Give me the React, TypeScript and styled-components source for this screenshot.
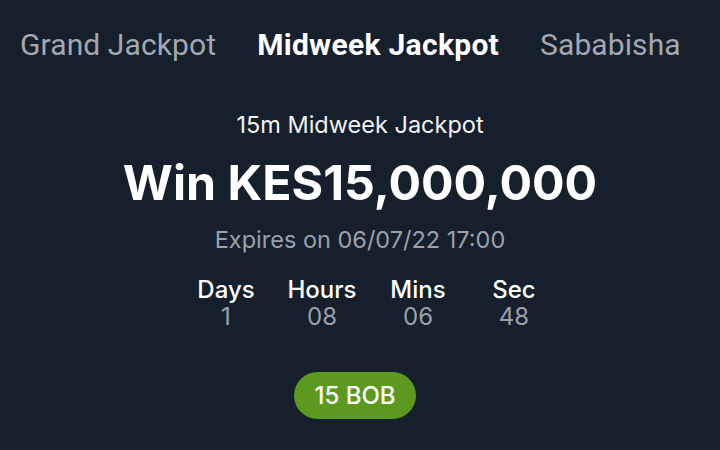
import styled, { createGlobalStyle } from 'styled-components';

const GlobalStyle = createGlobalStyle`
  html, body {
    margin: 0;
    padding: 0;
    background-color: #161f2c;
  }
  body {
    width: 720px;
    height: 450px;
    overflow: hidden;
    font-family: Inter, 'Noto Sans', sans-serif;
  }
`;

const tabs = ['Grand Jackpot', 'Midweek Jackpot', 'Sababisha'];
const active = 'Midweek Jackpot';

const countdown = [
  { label: 'Days', value: '1' },
  { label: 'Hours', value: '08' },
  { label: 'Mins', value: '06' },
  { label: 'Sec', value: '48' },
];

export default function App() {
  return (
    <Page>
      <GlobalStyle />
      <TabBar>
        {tabs.map((t) => (
          <Tab key={t} active={t === active}>
            {t}
          </Tab>
        ))}
      </TabBar>
      <Content>
        <Subtitle>15m Midweek Jackpot</Subtitle>
        <Title>Win KES15,000,000</Title>
        <Expiry>Expires on 06/07/22 17:00</Expiry>
        <Countdown>
          {countdown.map((c) => (
            <Unit key={c.label}>
              <UnitLabel>{c.label}</UnitLabel>
              <UnitValue>{c.value}</UnitValue>
            </Unit>
          ))}
        </Countdown>
        <StakeButton>15 BOB</StakeButton>
      </Content>
    </Page>
  );
}

/*
 * Styles
 */

const Page = styled.div`
  width: 720px;
  height: 450px;
  background-color: #161f2c;
  color: #ffffff;
  display: flex;
  flex-direction: column;
`;

const TabBar = styled.div`
  display: flex;
  gap: 41px;
  padding: 25px 0 0 20px;
  height: 42px;
`;

const Tab = styled.div<{ active?: boolean }>`
  font-family: Roboto, 'Liberation Sans', sans-serif;
  font-size: 30px;
  line-height: 40px;
  font-weight: ${(p) => (p.active ? 700 : 400)};
  letter-spacing: ${(p) => (p.active ? '0.3px' : '0.1px')};
  color: ${(p) => (p.active ? '#ffffff' : '#a3a8b0')};
  white-space: nowrap;
`;

const Content = styled.div`
  display: flex;
  flex-direction: column;
  align-items: center;
  padding-top: 44px;
`;

const Subtitle = styled.div`
  font-size: 23.5px;
  line-height: 28px;
  color: #f1f2f4;
`;

const Title = styled.div`
  font-size: 48.3px;
  font-weight: 700;
  line-height: 60px;
  margin-top: 14px;
`;

const Expiry = styled.div`
  font-size: 23.5px;
  line-height: 28px;
  color: #9ba1aa;
  margin-top: 13px;
`;

const Countdown = styled.div`
  display: flex;
  margin-top: 22px;
  margin-left: 20px;
`;

const Unit = styled.div`
  width: 96px;
  display: flex;
  flex-direction: column;
  align-items: center;
`;

const UnitLabel = styled.div`
  font-size: 24px;
  font-weight: 500;
  line-height: 27px;
  color: #ffffff;
`;

const UnitValue = styled.div`
  font-size: 24px;
  line-height: 27px;
  color: #9ba1aa;
`;

const StakeButton = styled.button`
  margin-top: 42px;
  margin-right: 10px;
  width: 122px;
  height: 47px;
  border: none;
  border-radius: 24px;
  background-color: #5b9a1f;
  color: #ffffff;
  font-family: Inter, 'Noto Sans', sans-serif;
  font-size: 24px;
  font-weight: 500;
  padding: 0;
`;
